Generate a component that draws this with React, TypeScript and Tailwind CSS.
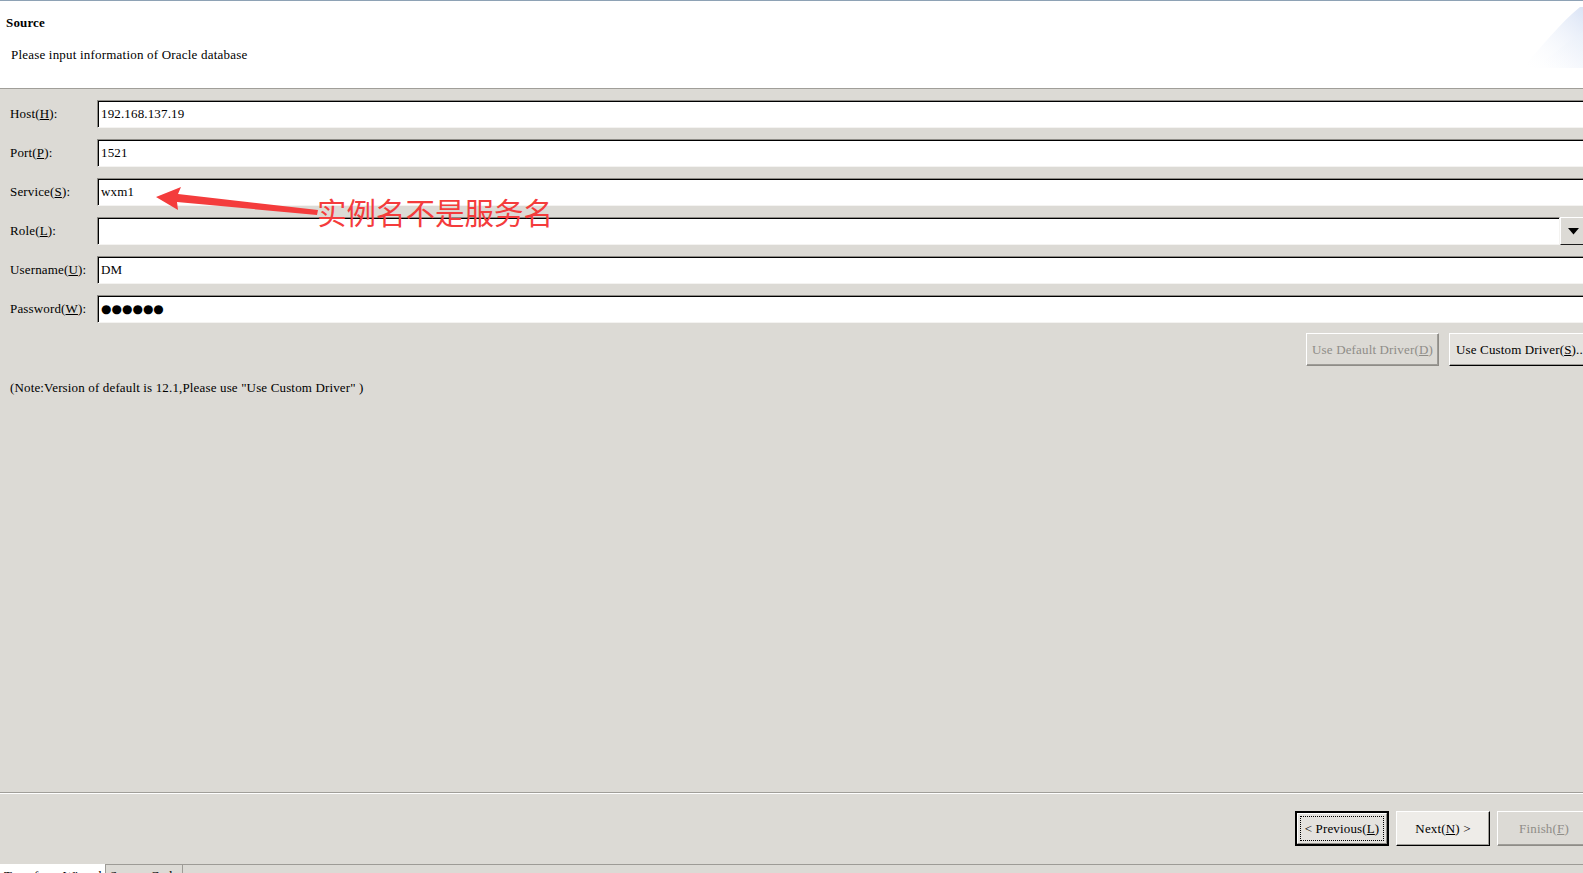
import React from "react";

const serif = "font-['Liberation_Serif','Times_New_Roman',serif]";

type Field = {
  label: string;
  key: string;
  value?: React.ReactNode;
  combo?: boolean;
};

const fields: Field[] = [
  { label: "Host", key: "H", value: "192.168.137.19" },
  { label: "Port", key: "P", value: "1521" },
  { label: "Service", key: "S", value: "wxm1" },
  { label: "Role", key: "L", combo: true },
  { label: "Username", key: "U", value: "DM" },
  {
    label: "Password",
    key: "W",
    value: (
      <span className="font-['DejaVu_Sans',sans-serif] text-[12px] tracking-[0px]">
        ●●●●●●
      </span>
    ),
  },
];

// campo com borda "afundada" estilo Swing/GTK
function Sunken({ children }: { children?: React.ReactNode }) {
  return (
    <div className="flex h-[28px] flex-1 items-center border border-t-[#8e8c87] border-l-[#8e8c87] border-b-[#f4f3f1] border-r-[#f4f3f1] bg-white pl-[2px] shadow-[inset_1px_1px_0_#000]">
      {children}
    </div>
  );
}

function Row({ f }: { f: Field }) {
  return (
    <div className="flex items-center">
      <div className="w-[87px] shrink-0 text-[13px] text-black">
        {f.label}(<u>{f.key}</u>):
      </div>
      {f.combo ? (
        <div className="flex h-[28px] flex-1">
          <Sunken />
          <div className="mr-[13px] flex w-[27px] items-center justify-center border-b border-r border-b-[#1b1b1b] border-r-[#1b1b1b] border-t border-l border-t-white border-l-white bg-[#dcdad5]">
            <svg width="11" height="7" viewBox="0 0 11 7">
              <path d="M0 0h11L5.5 6.5z" fill="#000" />
            </svg>
          </div>
        </div>
      ) : (
        <Sunken>
          <span className="pl-[1px] text-[13px] text-black">{f.value}</span>
        </Sunken>
      )}
    </div>
  );
}

function Btn({
  children,
  w,
  disabled,
  def,
  face = "bg-[#dcdad5]",
  h = "h-[33px]",
  extra = "justify-center",
}: {
  children: React.ReactNode;
  w: string;
  disabled?: boolean;
  def?: boolean;
  face?: string;
  h?: string;
  extra?: string;
}) {
  if (def) {
    return (
      <div className={`${w} ${h} shrink-0 border-2 border-black`}>
        <div className={`flex h-full items-center justify-center border border-t-white border-l-white border-b-[#8e8c87] border-r-[#8e8c87] ${face} p-[2px]`}>
          <div className="flex h-full w-full items-center justify-center border border-dotted border-black text-[13px] text-black">
            {children}
          </div>
        </div>
      </div>
    );
  }
  return (
    <div
      className={`${w} ${h} ${extra} flex shrink-0 items-center border border-t-white border-l-white ${
        disabled ? "border-b-[#8e8c87] border-r-[#8e8c87] text-[#8f8d88]" : "border-b-black border-r-black text-black"
      } ${face} whitespace-nowrap text-[13px] shadow-[inset_-1px_-1px_0_#9e9c97]`}
    >
      {children}
    </div>
  );
}

export default function App() {
  return (
    <div className={`relative h-[873px] w-[1583px] overflow-hidden bg-[#dcdad5] tracking-[0.15px] ${serif}`}>
      <div className="flex h-full w-[1600px] flex-col">
        {/* cabeçalho */}
        <div className="relative h-[89px] shrink-0 border-t border-t-[#8ea2b5] border-b border-b-[#a09e99] bg-white">
          <div className="pl-[6px] pt-[14px] text-[13px] font-bold leading-[15px] text-black">Source</div>
          <div className="pl-[11px] pt-[17px] text-[13px] leading-[15px] tracking-[0.2px] text-black">
            Please input information of Oracle database
          </div>
          <svg className="absolute left-[1522px] top-[6px]" width="62" height="62" viewBox="0 0 62 62">
            <defs>
              <linearGradient id="hg" x1="0" y1="1" x2="1" y2="0">
                <stop offset="0" stopColor="#ffffff" stopOpacity="0" />
                <stop offset="1" stopColor="#d9e3f5" />
              </linearGradient>
              <linearGradient id="hg2" x1="0" y1="1" x2="1" y2="0">
                <stop offset="0" stopColor="#ffffff" stopOpacity="0" />
                <stop offset="1" stopColor="#e9eff9" />
              </linearGradient>
            </defs>
            <path d="M0 61C18 42 38 16 58 0H62V61Z" fill="url(#hg)" />
            <path d="M14 61C30 48 46 34 62 24V61Z" fill="url(#hg2)" />
          </svg>
        </div>

        {/* formulário */}
        <div className="flex flex-1 flex-col pl-[10px] pt-[11px]">
          <div className="flex flex-col gap-[11px]">
            {fields.map((f) => (
              <Row key={f.key} f={f} />
            ))}
          </div>
          <div className="mt-[10px] flex justify-end gap-[10px] pr-0">
            <Btn w="w-[133px]" disabled>
              Use Default Driver(<u>D</u>)
            </Btn>
            <Btn w="w-[151px]" face="bg-[#e4e2de]" extra="justify-start pl-[6px]">
              Use Custom Driver(<u>S</u>)...
            </Btn>
          </div>
          <div className="mt-[14px] text-[13px] leading-[15px] text-black">
            (Note:Version of default is 12.1,Please use "Use Custom Driver" )
          </div>
        </div>

        {/* barra de botões */}
        <div className="flex h-[72px] shrink-0 items-start justify-end gap-[7px] border-t border-t-[#a09e99] pr-[9px] pt-[18px] shadow-[inset_0_1px_0_#ffffff]">
          <Btn w="w-[94px]" h="h-[35px]" def face="bg-[#e4e2de]">
            &lt; Previous(<u>L</u>)
          </Btn>
          <Btn w="w-[94px]" h="h-[35px]" face="bg-[#eeece8]">
            Next(<u>N</u>) &gt;
          </Btn>
          <Btn w="w-[94px]" h="h-[35px]" disabled>
            Finish(<u>F</u>)
          </Btn>
        </div>

        {/* abas */}
        <div className="flex h-[9px] shrink-0 text-[13px] text-black">
          <div className="h-[24px] w-[105px] bg-white pl-[4px] pt-[2px]">Transform Wizard</div>
          <div className="h-[24px] w-[78px] border-t border-x border-[#9d9b96] pl-[4px] pt-[1px]">Source Code</div>
          <div className="flex-1 border-t border-[#9d9b96]" />
        </div>
      </div>

      {/* anotação em vermelho */}
      <svg className="pointer-events-none absolute left-0 top-0" width="1583" height="873">
        <path
          d="M156 197L181 187L178 194L318 210L317 215L177 202L178 210Z"
          fill="#f43c3c"
        />
      </svg>
      <div className="pointer-events-none absolute left-[317px] top-[195px] font-['Noto_Sans_CJK_SC',sans-serif] text-[29.5px] leading-[32px] tracking-normal text-[#f43c3c]">
        实例名不是服务名
      </div>
    </div>
  );
}
